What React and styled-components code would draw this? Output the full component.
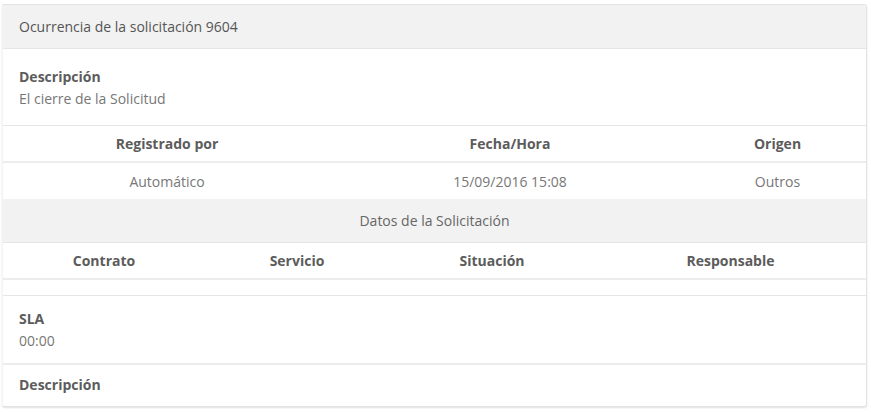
import styled, { createGlobalStyle } from "styled-components";

const GlobalStyle = createGlobalStyle`
  body {
    margin: 0;
    background: #fff;
    font-family: "Open Sans", "Liberation Sans", sans-serif;
    font-size: 14px;
    color: #666;
  }
`;

const Page = styled.div`
  padding: 4px 4px 4px 2px;
`;

const Panel = styled.div`
  background: #fff;
  border: 1px solid #e3e3e3;
  border-left-color: #f4f4f4;
  border-radius: 0 3px 3px 3px;
  box-shadow: 0 1px 2px rgba(0, 0, 0, 0.12);
  overflow: hidden;
`;

const Heading = styled.div`
  background: #f2f2f2;
  height: 43px;
  padding: 0 16px;
  display: flex;
  align-items: center;
  color: #555;
  border-bottom: 1px solid #e6e6e6;
`;

const Section = styled.div`
  padding: ${(p) => p.$pad || "16px 16px"};
  border-bottom: ${(p) => p.$border || "none"};
  line-height: 22px;
`;

const Label = styled.div`
  font-weight: 700;
  color: #5c5c5c;
`;

const Value = styled.div`
  color: #777;
`;

const Row = styled.div`
  display: grid;
  grid-template-columns: ${(p) => p.$cols};
  height: ${(p) => p.$h || "36px"};
  border-bottom: ${(p) => p.$border || "none"};
`;

const Cell = styled.div`
  display: flex;
  align-items: center;
  justify-content: center;
  font-weight: ${(p) => (p.$head ? 700 : 400)};
  color: ${(p) => (p.$head ? "#5c5c5c" : "#777")};
`;

const Banner = styled.div`
  background: #f2f2f2;
  height: 43px;
  display: flex;
  align-items: center;
  justify-content: center;
  color: #666;
  border-bottom: 1px solid #e6e6e6;
`;

const cols1 = "328px 358px 1fr";
const cols2 = "202px 184px 206px 1fr";

export default function App() {
  return (
    <>
      <GlobalStyle />
      <Page>
        <Panel>
          <Heading>Ocurrencia de la solicitación 9604</Heading>
          <Section $pad="17px 16px 15px" $border="1px solid #e6e6e6">
            <Label>Descripción</Label>
            <Value>El cierre de la Solicitud</Value>
          </Section>
          <Row $cols={cols1} $h="35px" $border="2px solid #ececec">
            <Cell $head>Registrado por</Cell>
            <Cell $head>Fecha/Hora</Cell>
            <Cell $head>Origen</Cell>
          </Row>
          <Row $cols={cols1}>
            <Cell>Automático</Cell>
            <Cell>15/09/2016 15:08</Cell>
            <Cell>Outros</Cell>
          </Row>
          <Banner>Datos de la Solicitación</Banner>
          <Row $cols={cols2} $h="35px" $border="2px solid #ececec">
            <Cell $head>Contrato</Cell>
            <Cell $head>Servicio</Cell>
            <Cell $head>Situación</Cell>
            <Cell $head>Responsable</Cell>
          </Row>
          <Row $cols={cols2} $h="15px" $border="1px solid #e6e6e6" />
          <Section $pad="12px 16px 11px" $border="2px solid #ececec">
            <Label>SLA</Label>
            <Value>00:00</Value>
          </Section>
          <Section $pad="9px 16px 10px">
            <Label>Descripción</Label>
          </Section>
        </Panel>
      </Page>
    </>
  );
}
